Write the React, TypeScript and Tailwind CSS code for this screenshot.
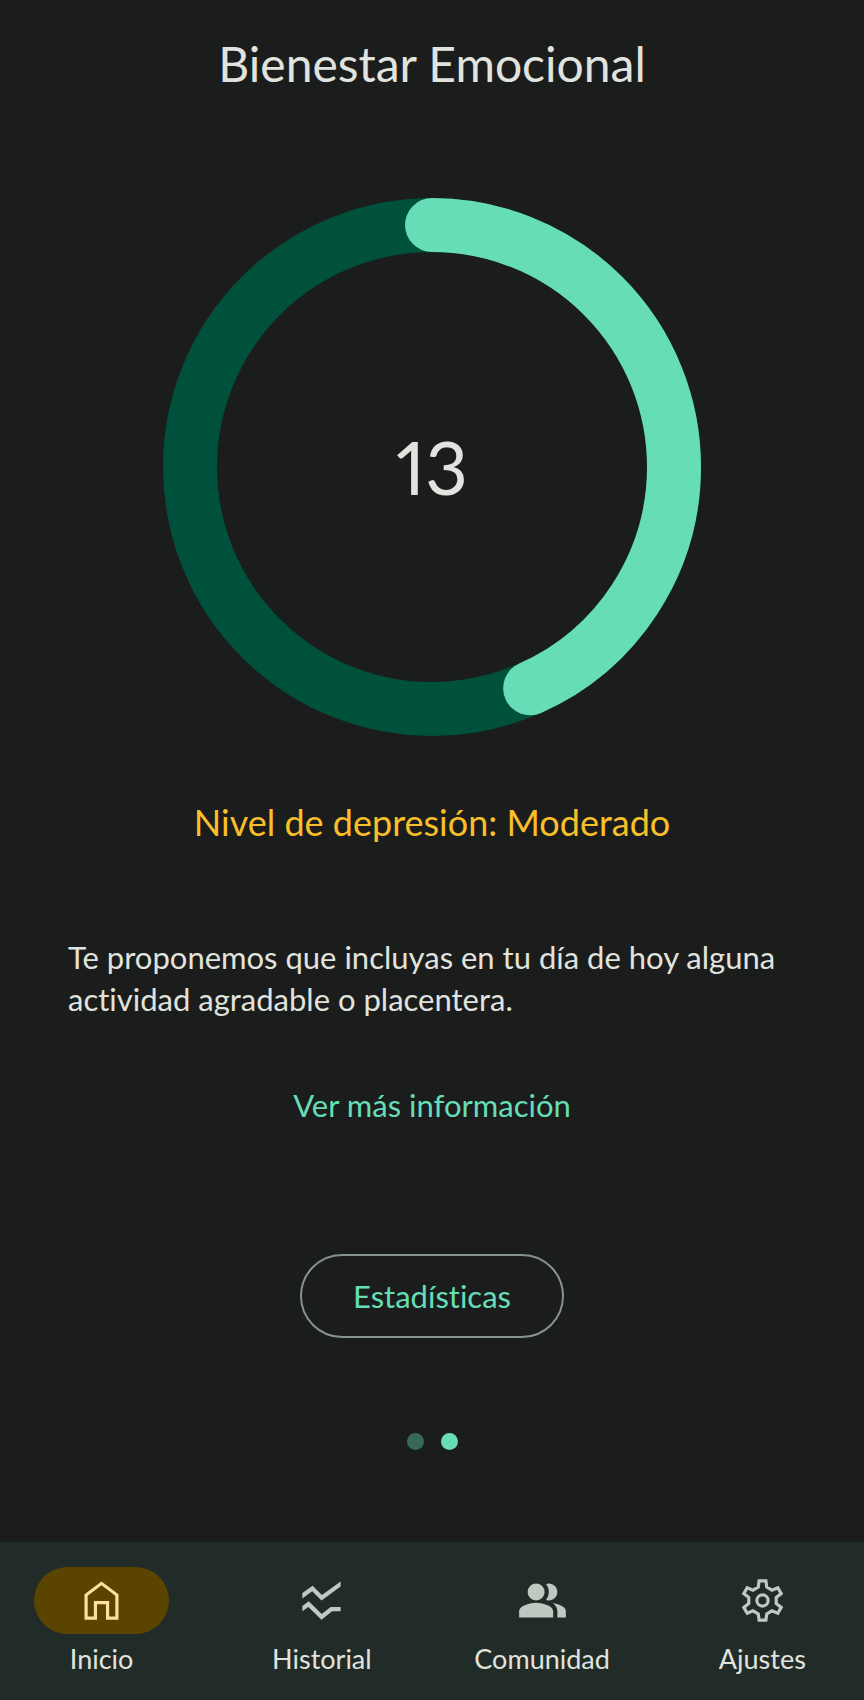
import type { ReactNode } from "react";

const MAX_SCORE = 30;

function ScoreRing({ score }: { score: number }) {
  const radius = 242;
  const length = 2 * Math.PI * radius;
  return (
    <div className="grid w-[538px] max-w-full place-items-center">
      <svg viewBox="0 0 538 538" className="col-start-1 row-start-1 w-full" fill="none" strokeWidth="54" aria-hidden="true">
        <circle cx="269" cy="269" r={radius} stroke="#00513c" />
        <circle
          cx="269"
          cy="269"
          r={radius}
          stroke="#66ddb7"
          strokeLinecap="round"
          strokeDasharray={`${(length * score) / MAX_SCORE} ${length}`}
          transform="rotate(-90 269 269)"
        />
      </svg>
      <p className="col-start-1 row-start-1 text-[74px] leading-[96px] proportional-nums">{score}</p>
    </div>
  );
}

function Icon({ children }: { children: ReactNode }) {
  return (
    <svg viewBox="0 0 24 24" className="size-[51px]" fill="currentColor" aria-hidden="true">
      {children}
    </svg>
  );
}

const tabs = [
  {
    label: "Inicio",
    icon: (
      <path
        fillRule="evenodd"
        d="M4 21V9l8-6 8 6v12h-5.9v-7.25H9.9V21zM5.5 19.5h2.9v-7.25h7.2v7.25h2.9V9.75L12 4.87 5.5 9.75z"
      />
    ),
  },
  {
    label: "Historial",
    icon: (
      <path d="M21 5.47 12 12 7.62 7.62 3 11V8.52L7.83 5l4.38 4.38L21 3zM21 15h-4.7l-4.17 3.34L6 12.41l-3 2.13V17l2.8-2 6.2 6 5-4h4z" />
    ),
  },
  {
    label: "Comunidad",
    icon: (
      <>
        <path d="M16.67 13.13C18.04 14.06 19 15.32 19 17v3h4v-3c0-2.18-3.57-3.47-6.33-3.87z" />
        <circle cx="9" cy="8" r="4" />
        <path d="M15 12c2.21 0 4-1.79 4-4s-1.79-4-4-4c-.47 0-.91.1-1.33.24a5.98 5.98 0 0 1 0 7.52c.42.14.86.24 1.33.24z" />
        <path d="M9 13c-2.67 0-8 1.34-8 4v3h16v-3c0-2.66-5.33-4-8-4z" />
      </>
    ),
  },
  {
    label: "Ajustes",
    icon: (
      <g fill="none" stroke="currentColor" strokeWidth="1.5">
        <path d="M10.4 2.75H13.6L14 5.7 16.46 7.12 19.2 6 20.8 8.76 18.46 10.58V13.42L20.8 15.24 19.2 18 16.46 16.88 14 18.3 13.6 21.25H10.4L10 18.3 7.54 16.88 4.8 18 3.2 15.24 5.54 13.42V10.58L3.2 8.76 4.8 6 7.54 7.12 10 5.7z" />
        <circle cx="12" cy="12" r="2.65" />
      </g>
    ),
  },
];

export default function App() {
  return (
    <div className="flex min-h-screen flex-col bg-[#1b1d1c] font-['Lato','Open_Sans',sans-serif] text-[#e1e3df] [font-variant-ligatures:no-common-ligatures]">
      <main className="flex flex-1 flex-col items-center px-[68px] pt-[32px]">
        <h1 className="text-center text-[48px] leading-[64px]">Bienestar Emocional</h1>
        <div className="mt-[102px] flex w-full justify-center">
          <ScoreRing score={13} />
        </div>
        <p className="mt-[62px] text-center text-[36px] leading-[48px] text-[#f8bf2a]">Nivel de depresión: Moderado</p>
        <p className="mt-[90px] w-full text-[31px] leading-[42px]">
          Te proponemos que incluyas en tu día de hoy alguna actividad agradable o placentera.
        </p>
        <a href="#informacion" className="mt-[64px] text-[31px] leading-[42px] text-[#66ddb7]">
          Ver más información
        </a>
        <button
          type="button"
          className="mt-[128px] h-[84px] w-[264px] rounded-full border-2 border-[#89938d] text-[31px] leading-[42px] text-[#66ddb7]"
        >
          Estadísticas
        </button>
        <div className="mt-[95px] flex gap-[17px] pb-8">
          <button type="button" aria-label="Página 1" className="size-[17px] rounded-full bg-[#37695a]" />
          <button type="button" aria-label="Página 2" className="size-[17px] rounded-full bg-[#66ddb7]" />
        </div>
      </main>
      <nav className="grid grid-cols-4 gap-[17px] bg-[#212c28] pt-[25px] pb-[24px]">
        {tabs.map((tab, index) => (
          <a key={tab.label} href={`#${tab.label.toLowerCase()}`} className="flex flex-col items-center gap-[8px]">
            <span
              className={
                index === 0
                  ? "flex h-[67px] w-[135px] items-center justify-center rounded-full bg-[#5b4300] text-[#ffdf9e]"
                  : "flex h-[67px] w-[135px] items-center justify-center rounded-full text-[#bfc9c2]"
              }
            >
              <Icon>{tab.icon}</Icon>
            </span>
            <span className="text-[27px] leading-[34px]">{tab.label}</span>
          </a>
        ))}
      </nav>
    </div>
  );
}
